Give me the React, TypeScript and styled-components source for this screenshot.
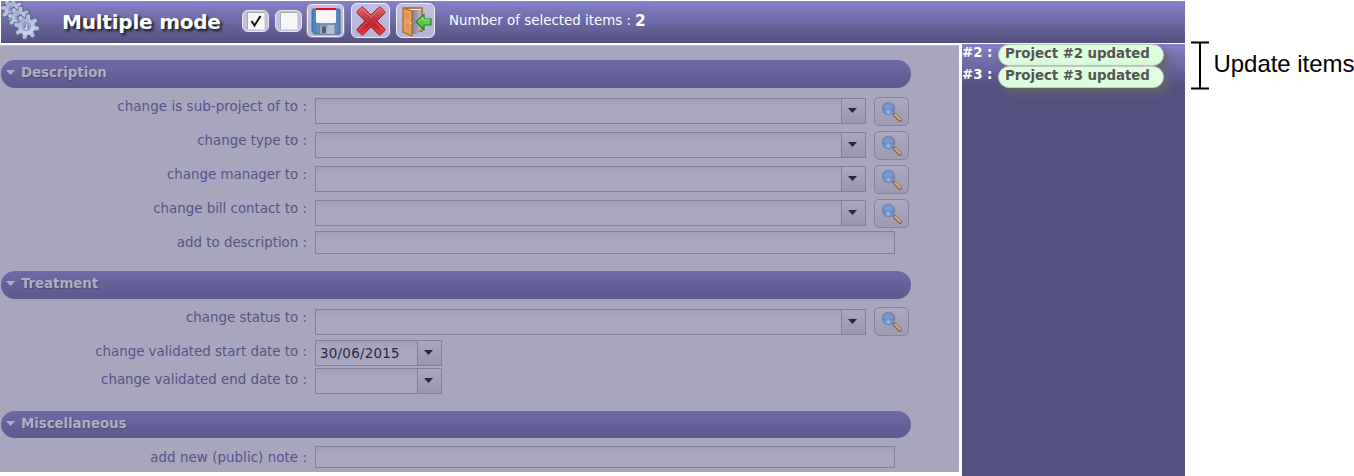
import React from "react";
import styled, { createGlobalStyle } from "styled-components";

const Global = createGlobalStyle`
  * { box-sizing: border-box; }
  body { margin: 0; background: #fff; overflow: hidden; font-family: "DejaVu Sans", sans-serif; }
`;

const Page = styled.div`
  display: flex;
  width: 1354px;
  height: 476px;
`;
const Application = styled.div`
  width: 1185px;
  display: flex;
  flex-direction: column;
`;
const Toolbar = styled.header`
  height: 42px;
  margin: 1px 0 0 1px;
  display: flex;
  align-items: flex-start;
  flex: none;
  background: linear-gradient(#8481c9, #545180);
  color: #fff;
`;
const GearIcon = styled.svg`
  width: 40px;
  height: 40px;
  flex: none;
`;
const Title = styled.h1`
  margin: 8px 0 0 21px;
  width: 180px;
  font-size: 20px;
  line-height: 26px;
  font-weight: bold;
  letter-spacing: -0.22px;
  white-space: nowrap;
  text-shadow: 2px 2px 3px #111;
`;
const CheckButton = styled.button`
  width: 27px;
  height: 22px;
  margin: 9px 6px 0 0;
  padding: 0;
  display: flex;
  align-items: center;
  justify-content: center;
  border: 1px solid #e8e6f5;
  border-radius: 6px;
  background: #c2c0df;
`;
const CheckFace = styled.svg`
  width: 18px;
  height: 18px;
  background: #f6f6f6;
  border: 1px solid #aaa;
  border-right-color: #ddd;
  border-bottom-color: #ddd;
`;
const Tools = styled.div`
  display: flex;
  margin-left: -1px;
`;
const ToolButton = styled.button<{ $active?: boolean }>`
  width: 39px;
  height: 35px;
  margin: 2px 6px 0 0;
  padding: 0;
  display: flex;
  align-items: center;
  justify-content: center;
  border: ${(p) => (p.$active ? "1px solid #8b899b" : "1px solid #f0eff8")};
  box-shadow: ${(p) => (p.$active ? "inset 0 0 0 1px #eeedf8" : "none")};
  border-radius: 6px;
  background: linear-gradient(#c1bfe1, #b5b3d1);
  svg { width: 32px; height: 32px; flex: none; }
  &:first-child { margin-left: -1px; }
`;
const Count = styled.div`
  margin: 11px 0 0 8px;
  display: flex;
  gap: 4px;
  font-size: 13.4px;
  line-height: 18px;
  white-space: nowrap;
  b { font-size: 15.5px; }
`;
const Body = styled.main`
  display: flex;
  flex: 1;
  margin-top: 1px;
`;
const Form = styled.section`
  width: 959px;
  height: 427px;
  margin: 1px 3px 0 0;
  border-top: 1px solid #bbb9cd;
  background: #a8a6bc;
  color: #565387;
  padding-top: 14px;
`;
const SectionBar = styled.h2<{ $height?: number }>`
  margin: 0 0 0 1px;
  width: 910px;
  height: ${(p) => p.$height ?? 28}px;
  padding: 3px 0 0 5px;
  display: flex;
  gap: 6px;
  border-radius: 14px;
  background: linear-gradient(#6d6aa6, #5c598e);
  color: #b0aec3;
  font-size: 13.4px;
  line-height: 19px;
  letter-spacing: -0.08px;
  text-shadow: 1px 1px 1px #4c4969;
  svg { width: 9px; height: 5px; margin-top: 7px; }
`;
const Rows = styled.div<{ $top: number; $bottom: number }>`
  padding: ${(p) => p.$top}px 0 ${(p) => p.$bottom}px;
`;
const DateRows = styled.div`
  margin-top: -1px;
`;
const Row = styled.div<{ $height: number }>`
  display: flex;
  height: ${(p) => p.$height}px;
`;
const Label = styled.label<{ $top: number; $spacing?: number }>`
  width: 307px;
  margin-right: 8px;
  padding-top: ${(p) => p.$top}px;
  text-align: right;
  font-size: 13.4px;
  line-height: 18px;
  letter-spacing: ${(p) => p.$spacing ?? -0.01}px;
  white-space: nowrap;
`;
const Field = styled.div<{ $width: number; $height: number; $top?: number }>`
  width: ${(p) => p.$width}px;
  height: ${(p) => p.$height}px;
  margin-top: ${(p) => p.$top ?? 0}px;
  display: flex;
  border: 1px solid #827f9a;
  background: linear-gradient(#a19fb6, #a9a7bf 7px);
`;
const Value = styled.span`
  flex: 1;
  padding: 4px 0 0 4px;
  font-size: 13.4px;
  line-height: 18px;
  letter-spacing: 0.27px;
  color: #292640;
`;
const Arrow = styled.span`
  width: 24px;
  padding: 9px 0 0 6px;
  border-left: 1px solid #827f9a;
  background: linear-gradient(#aaa8bd, #9896ad);
  svg { display: block; width: 9px; height: 5px; }
`;
const SearchButton = styled.button<{ $top: number }>`
  width: 35px;
  height: 29px;
  margin: ${(p) => p.$top}px 0 0 8px;
  padding: 0;
  border: 1px solid #85829c;
  border-radius: 5px;
  background: linear-gradient(#aba9be, #9c9ab0);
  display: flex;
  align-items: center;
  justify-content: center;
  svg { width: 22px; height: 22px; flex: none; }
`;
const Results = styled.aside`
  width: 223px;
  background: linear-gradient(#8481c9, #545180 42px);
`;
const Result = styled.div`
  display: flex;
  height: 22px;
  color: #fff;
  font-size: 13.4px;
  font-weight: bold;
  line-height: 18px;
  letter-spacing: -0.08px;
  white-space: nowrap;
`;
const ResultId = styled.span`
  width: 36px;
`;
const Badge = styled.span`
  width: 166px;
  height: 22px;
  padding-left: 6px;
  border: 1px solid #c1c8c7;
  border-radius: 11px;
  background: #ddffdd;
  color: #555;
  box-shadow: 5px 5px 9px #66666a;
`;
const Annotation = styled.div`
  display: flex;
  align-items: flex-start;
  padding: 41px 0 0 6px;
  color: #000;
  font: 24px/28px "Liberation Sans", sans-serif;
  letter-spacing: -0.04px;
  white-space: nowrap;
  svg { width: 19px; height: 49px; flex: none; }
  span { margin: 9px 0 0 3.5px; }
`;

const Triangle = ({ color }: { color: string }) => (
  <svg viewBox="0 0 9 5"><path d="M0 0h9L4.5 5z" fill={color} /></svg>
);

const teeth = [0, 45, 90, 135, 180, 225, 270, 315];

const Gears = () => (
  <GearIcon viewBox="0 0 40 40">
    <defs>
      <linearGradient id="gear" gradientUnits="userSpaceOnUse" x1="-8" y1="-9" x2="6" y2="10">
        <stop offset="0" stopColor="#8298bf" />
        <stop offset=".4" stopColor="#b4c2df" />
        <stop offset="1" stopColor="#dcd8f6" />
      </linearGradient>
    </defs>
    {[[11, 8.5, 0.93], [18, 16.5, 0.93], [25.5, 25.5, 1.05]].map(([x, y, s]) => (
      <g key={x} transform={`translate(${x} ${y}) rotate(10) scale(${s})`}>
        {teeth.map((angle) => (
          <path key={angle} d="M-2.800-7l1-5.300h3.600l1 5.300z" transform={`rotate(${angle})`} fill="url(#gear)" stroke="#566584" strokeWidth="1" />
        ))}
        <circle r="8.700" fill="#566584" />
        {teeth.map((angle) => (
          <path key={angle} d="M-2.300-7l.8-4.600h3l.8 4.600z" transform={`rotate(${angle})`} fill="#b9c3df" />
        ))}
        <circle r="8" fill="url(#gear)" />
        <circle r="3.700" fill="#a6acd2" stroke="#8790b5" strokeWidth=".8" />
        <circle r="2.300" fill="#777daa" />
        <path d="M-1.500 1.200h3L0 3.500zM-.7-2h1.400V1H-.7z" fill="#e1def7" />
      </g>
    ))}
  </GearIcon>
);

const Save = () => (
  <svg viewBox="0 0 32 32">
    <defs><linearGradient id="disk" x2="1" y2="0"><stop stopColor="#497fb4" /><stop offset=".5" stopColor="#7ba8d0" /><stop offset="1" stopColor="#5380ad" /></linearGradient></defs>
    <path d="M3.500 4h25q1.500 0 1.500 1.500V28q0 1-1 1H5L2 26.500v-21Q2 4 3.500 4z" fill="url(#disk)" stroke="#426d9a" />
    <path d="M6 4h20v12.500q0 1.500-1.500 1.500h-17Q6 18 6 16.500z" fill="#f7f7fa" />
    <path d="M6 3h20v2H6z" fill="#e40d20" />
    <path d="M9.500 20h15v9h-15z" fill="#9daab8" stroke="#617590" strokeWidth=".7" />
    <path d="M12 21.500h4V28h-4z" fill="#456182" />
    <path d="M18 20h6.500v9H16z" fill="#b6bfc8" />
  </svg>
);

const Remove = () => (
  <svg viewBox="0 0 32 32">
    <defs><linearGradient id="cross" x2="0" y2="1"><stop stopColor="#e2666b" /><stop offset=".48" stopColor="#b9343f" /><stop offset=".65" stopColor="#c51f29" /><stop offset="1" stopColor="#ef3d40" /></linearGradient></defs>
    <path d="M8.500 2.500l7.500 7.500 7.500-7.500q1.200-1 2.400 0l3.600 3.600q1.200 1.200 0 2.400L22 16l7.500 7.500q1.200 1.200 0 2.400L25.900 29.500q-1.200 1-2.400 0L16 22l-7.500 7.500q-1.200 1-2.400 0l-3.600-3.600q-1-1.200 0-2.400L10 16 2.500 8.500q-1-1.200 0-2.400l3.600-3.600q1.200-1 2.400 0z" fill="url(#cross)" stroke="#ad2431" />
    <path d="M3.700 6.900l3.600-3.200 8.700 8.300 8.700-8.300 3.600 3.200M3.700 25l7.500-7.500M28.300 25l-7.500-7.500" fill="none" stroke="#e98288" strokeWidth=".7" />
  </svg>
);

const Exit = () => (
  <svg viewBox="0 0 32 32">
    <defs><linearGradient id="opening" x2="1"><stop stopColor="#77788c" /><stop offset="1" stopColor="#bbb9c9" /></linearGradient></defs>
    <path d="M4 3h18v23H4z" fill="#eeeaf2" stroke="#bd763c" strokeWidth="2" />
    <path d="M11 5h10v19l-5 5h-5z" fill="url(#opening)" />
    <path d="M3 3l9 3v25l-9-4z" fill="#e99b55" stroke="#a76833" strokeWidth="1.200" />
    <path d="M5 6.500l5 1.500v8l-5-1zM5 17l5 1v8.500L5 25z" fill="#dc9252" stroke="#f0b173" strokeWidth=".6" />
    <circle cx="10.500" cy="18" r=".8" fill="#fff0b7" />
    <path d="M16 17l8-7.500V14h7v6h-7v4.500z" fill="#62c74e" stroke="#168428" strokeWidth="1.200" />
    <path d="M18 16.500l5-4.500v3h7" fill="none" stroke="#a4ed7c" />
  </svg>
);

const Magnifier = () => (
  <svg viewBox="0 0 22 22">
    <defs><radialGradient id="lens" cx=".5" cy=".78"><stop stopColor="#a3c6e1" /><stop offset=".48" stopColor="#6b91cc" /><stop offset="1" stopColor="#688bc4" /></radialGradient></defs>
    <path d="M14 14l5 5" stroke="#8e6757" strokeWidth="4" strokeLinecap="round" />
    <path d="M14.300 13.700l4.700 4.700" stroke="#d2ae83" strokeWidth="2" strokeLinecap="round" />
    <path d="M11.500 11.500l2 2" stroke="#777791" strokeWidth="3" />
    <circle cx="7.500" cy="7.500" r="6.200" fill="url(#lens)" stroke="#7885ad" strokeWidth="1.200" />
    <path d="M2.800 6.500Q4 2.500 7.500 2.500t4.700 4Q7.500 9 2.800 6.500z" fill="#86a5d5" fillOpacity=".55" />
  </svg>
);

type PickerProps = { label: string; spacing?: number; buttonTop?: number };

const Picker = ({ label, spacing, buttonTop = 1 }: PickerProps) => (
  <Row $height={34}>
    <Label $top={2} $spacing={spacing}>{label}</Label>
    <Field $width={551} $height={26} $top={2}>
      <Value />
      <Arrow><Triangle color="#282540" /></Arrow>
    </Field>
    <SearchButton $top={buttonTop}><Magnifier /></SearchButton>
  </Row>
);

const DateRow = ({ label, value }: { label: string; value?: string }) => (
  <Row $height={28}>
    <Label $top={3}>{label}</Label>
    <Field $width={127} $height={26}>
      <Value>{value}</Value>
      <Arrow><Triangle color="#282540" /></Arrow>
    </Field>
  </Row>
);

const Section = ({ title, height }: { title: string; height?: number }) => (
  <SectionBar $height={height}><Triangle color="#b0aec3" />{title}</SectionBar>
);

export default function App() {
  return (
    <Page>
      <Global />
      <Application>
        <Toolbar>
          <Gears />
          <Title>Multiple mode</Title>
          <CheckButton>
            <CheckFace viewBox="0 0 16 16"><path d="M3.500 8l3 4.500L12.500 3" fill="none" stroke="#111" strokeWidth="2" /></CheckFace>
          </CheckButton>
          <CheckButton><CheckFace viewBox="0 0 16 16" /></CheckButton>
          <Tools>
            <ToolButton $active><Save /></ToolButton>
            <ToolButton><Remove /></ToolButton>
            <ToolButton><Exit /></ToolButton>
          </Tools>
          <Count>Number of selected items : <b>2</b></Count>
        </Toolbar>
        <Body>
          <Form>
            <Section title="Description" />
            <Rows $top={8} $bottom={17}>
              <Picker label="change is sub-project of to :" spacing={0.08} />
              <Picker label="change type to :" />
              <Picker label="change manager to :" />
              <Picker label="change bill contact to :" />
              <Row $height={22}>
                <Label $top={2}>add to description :</Label>
                <Field $width={580} $height={23} $top={-1} />
              </Row>
            </Rows>
            <Section title="Treatment" />
            <Rows $top={8} $bottom={15}>
              <Picker label="change status to :" buttonTop={0} />
              <DateRows>
                <DateRow label="change validated start date to :" value="30/06/2015" />
                <DateRow label="change validated end date to :" />
              </DateRows>
            </Rows>
            <Section title="Miscellaneous" height={27} />
            <Rows $top={8} $bottom={0}>
              <Row $height={22}>
                <Label $top={3} $spacing={0.06}>add new (public) note :</Label>
                <Field $width={580} $height={22} />
              </Row>
            </Rows>
          </Form>
          <Results>
            <Result><ResultId>#2 :</ResultId><Badge>Project #2 updated</Badge></Result>
            <Result><ResultId>#3 :</ResultId><Badge>Project #3 updated</Badge></Result>
          </Results>
        </Body>
      </Application>
      <Annotation>
        <svg viewBox="0 0 19 49"><path d="M0 1.500h18M0 47.500h18M9 1v46" fill="none" stroke="#000" strokeWidth="2" /></svg>
        <span>Update items</span>
      </Annotation>
    </Page>
  );
}
